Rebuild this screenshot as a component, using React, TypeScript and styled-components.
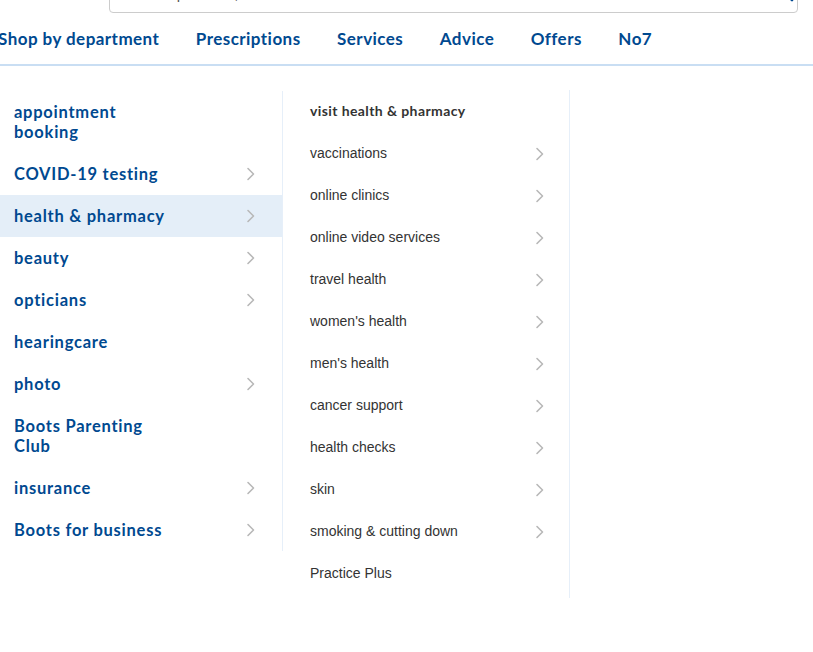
import React from "react";
import styled, { createGlobalStyle } from "styled-components";

const GlobalStyle = createGlobalStyle`
  html, body { margin: 0; padding: 0; background: #ffffff; }
  body { overflow: hidden; font-family: "Liberation Sans", Arial, sans-serif; }
  * { box-sizing: border-box; }
`;

const Page = styled.div`
  width: 813px;
  height: 652px;
  overflow: hidden;
  display: flex;
  flex-direction: column;
`;

const SearchRow = styled.div`
  display: flex;
  padding-left: 109px;
`;

const SearchBox = styled.div`
  width: 689px;
  height: 44px;
  margin-top: -31px;
  border: 1px solid #cccccc;
  border-radius: 4px;
  display: flex;
  align-items: center;
  justify-content: space-between;
  padding: 4px 3px 0 15px;
  font-family: "Liberation Sans", Arial, sans-serif;
  font-size: 15px;
  color: #555555;
`;

const SearchIcon = styled.svg`
  width: 20px;
  height: 20px;
  margin-top: -2px;
  color: #004990;
`;

const Nav = styled.nav`
  height: 53px;
  display: flex;
  align-items: center;
  gap: 36.5px;
  margin-left: -2px;
  border-bottom: 2px solid #c9def3;
`;

const NavLink = styled.a`
  font-family: Lato, "Open Sans", sans-serif;
  font-weight: 700;
  font-size: 17px;
  letter-spacing: 0.45px;
  color: #004990;
  text-decoration: none;
  white-space: nowrap;
`;

const Menu = styled.div`
  display: flex;
  align-items: flex-start;
  padding-top: 24px;
`;

const LeftCol = styled.ul`
  list-style: none;
  margin: 1px 0 0 0;
  padding: 0;
  width: 283px;
  border-right: 1px solid #e6eff9;
`;

const LeftItem = styled.li<{ $active?: boolean }>`
  display: flex;
  align-items: center;
  justify-content: space-between;
  padding: 11px 26px 11px 14px;
  background: ${(p) => (p.$active ? "#e4eef8" : "transparent")};
  font-family: Lato, "Open Sans", sans-serif;
  font-weight: 700;
  font-size: 16.5px;
  letter-spacing: 0.75px;
  line-height: 20px;
  color: #004990;
`;

const LeftLabel = styled.span`
  max-width: 164px;
`;

const MidCol = styled.ul`
  list-style: none;
  margin: 0;
  padding: 0 0 4px 0;
  width: 287px;
  border-right: 1px solid #e6eff9;
`;

const MidHeader = styled.li`
  height: 42px;
  display: flex;
  align-items: center;
  padding: 0 24px 1px 27px;
  font-family: Lato, "Open Sans", sans-serif;
  font-weight: 700;
  font-size: 14px;
  letter-spacing: 0.4px;
  color: #333333;
`;

const MidItem = styled.li`
  height: 42px;
  display: flex;
  align-items: center;
  justify-content: space-between;
  padding: 0 24px 0 27px;
  font-family: "Liberation Sans", Arial, sans-serif;
  font-size: 14px;
  color: #333333;
`;

const ChevronSvg = styled.svg<{ $drop?: number }>`
  width: 10px;
  height: 14px;
  flex: none;
  margin-top: ${(p) => p.$drop ?? 0}px;
`;

const Chevron = ({ drop }: { drop?: number }) => (
  <ChevronSvg $drop={drop} viewBox="0 0 10 14" fill="none">
    <path d="M2 1.5 L7.5 7 L2 12.5" stroke="#b8b8b8" strokeWidth="1.6" strokeLinecap="round" strokeLinejoin="round" />
  </ChevronSvg>
);

const navItems = ["Shop by department", "Prescriptions", "Services", "Advice", "Offers", "No7"];

const leftItems: { label: string; chev: boolean; active?: boolean }[] = [
  { label: "appointment booking", chev: false },
  { label: "COVID-19 testing", chev: true },
  { label: "health & pharmacy", chev: true, active: true },
  { label: "beauty", chev: true },
  { label: "opticians", chev: true },
  { label: "hearingcare", chev: false },
  { label: "photo", chev: true },
  { label: "Boots Parenting Club", chev: false },
  { label: "insurance", chev: true },
  { label: "Boots for business", chev: true },
];

const midItems: { label: string; chev: boolean }[] = [
  { label: "vaccinations", chev: true },
  { label: "online clinics", chev: true },
  { label: "online video services", chev: true },
  { label: "travel health", chev: true },
  { label: "women's health", chev: true },
  { label: "men's health", chev: true },
  { label: "cancer support", chev: true },
  { label: "health checks", chev: true },
  { label: "skin", chev: true },
  { label: "smoking & cutting down", chev: true },
  { label: "Practice Plus", chev: false },
];

export default function App() {
  return (
    <Page>
      <GlobalStyle />
      <SearchRow>
        <SearchBox>
          <span>Search products, brands and more</span>
          <SearchIcon viewBox="0 0 20 20" fill="none">
            <circle cx="8.5" cy="8.5" r="6" stroke="currentColor" strokeWidth="2.2" />
            <path d="M13 13 L18 18" stroke="currentColor" strokeWidth="2.6" strokeLinecap="round" />
          </SearchIcon>
        </SearchBox>
      </SearchRow>
      <Nav>
        {navItems.map((n) => (
          <NavLink key={n} href="#">
            {n}
          </NavLink>
        ))}
      </Nav>
      <Menu>
        <LeftCol>
          {leftItems.map((it) => (
            <LeftItem key={it.label} $active={it.active}>
              <LeftLabel>{it.label}</LeftLabel>
              {it.chev && <Chevron />}
            </LeftItem>
          ))}
        </LeftCol>
        <MidCol>
          <MidHeader>visit health &amp; pharmacy</MidHeader>
          {midItems.map((it) => (
            <MidItem key={it.label}>
              <span>{it.label}</span>
              {it.chev && <Chevron drop={2} />}
            </MidItem>
          ))}
        </MidCol>
      </Menu>
    </Page>
  );
}
